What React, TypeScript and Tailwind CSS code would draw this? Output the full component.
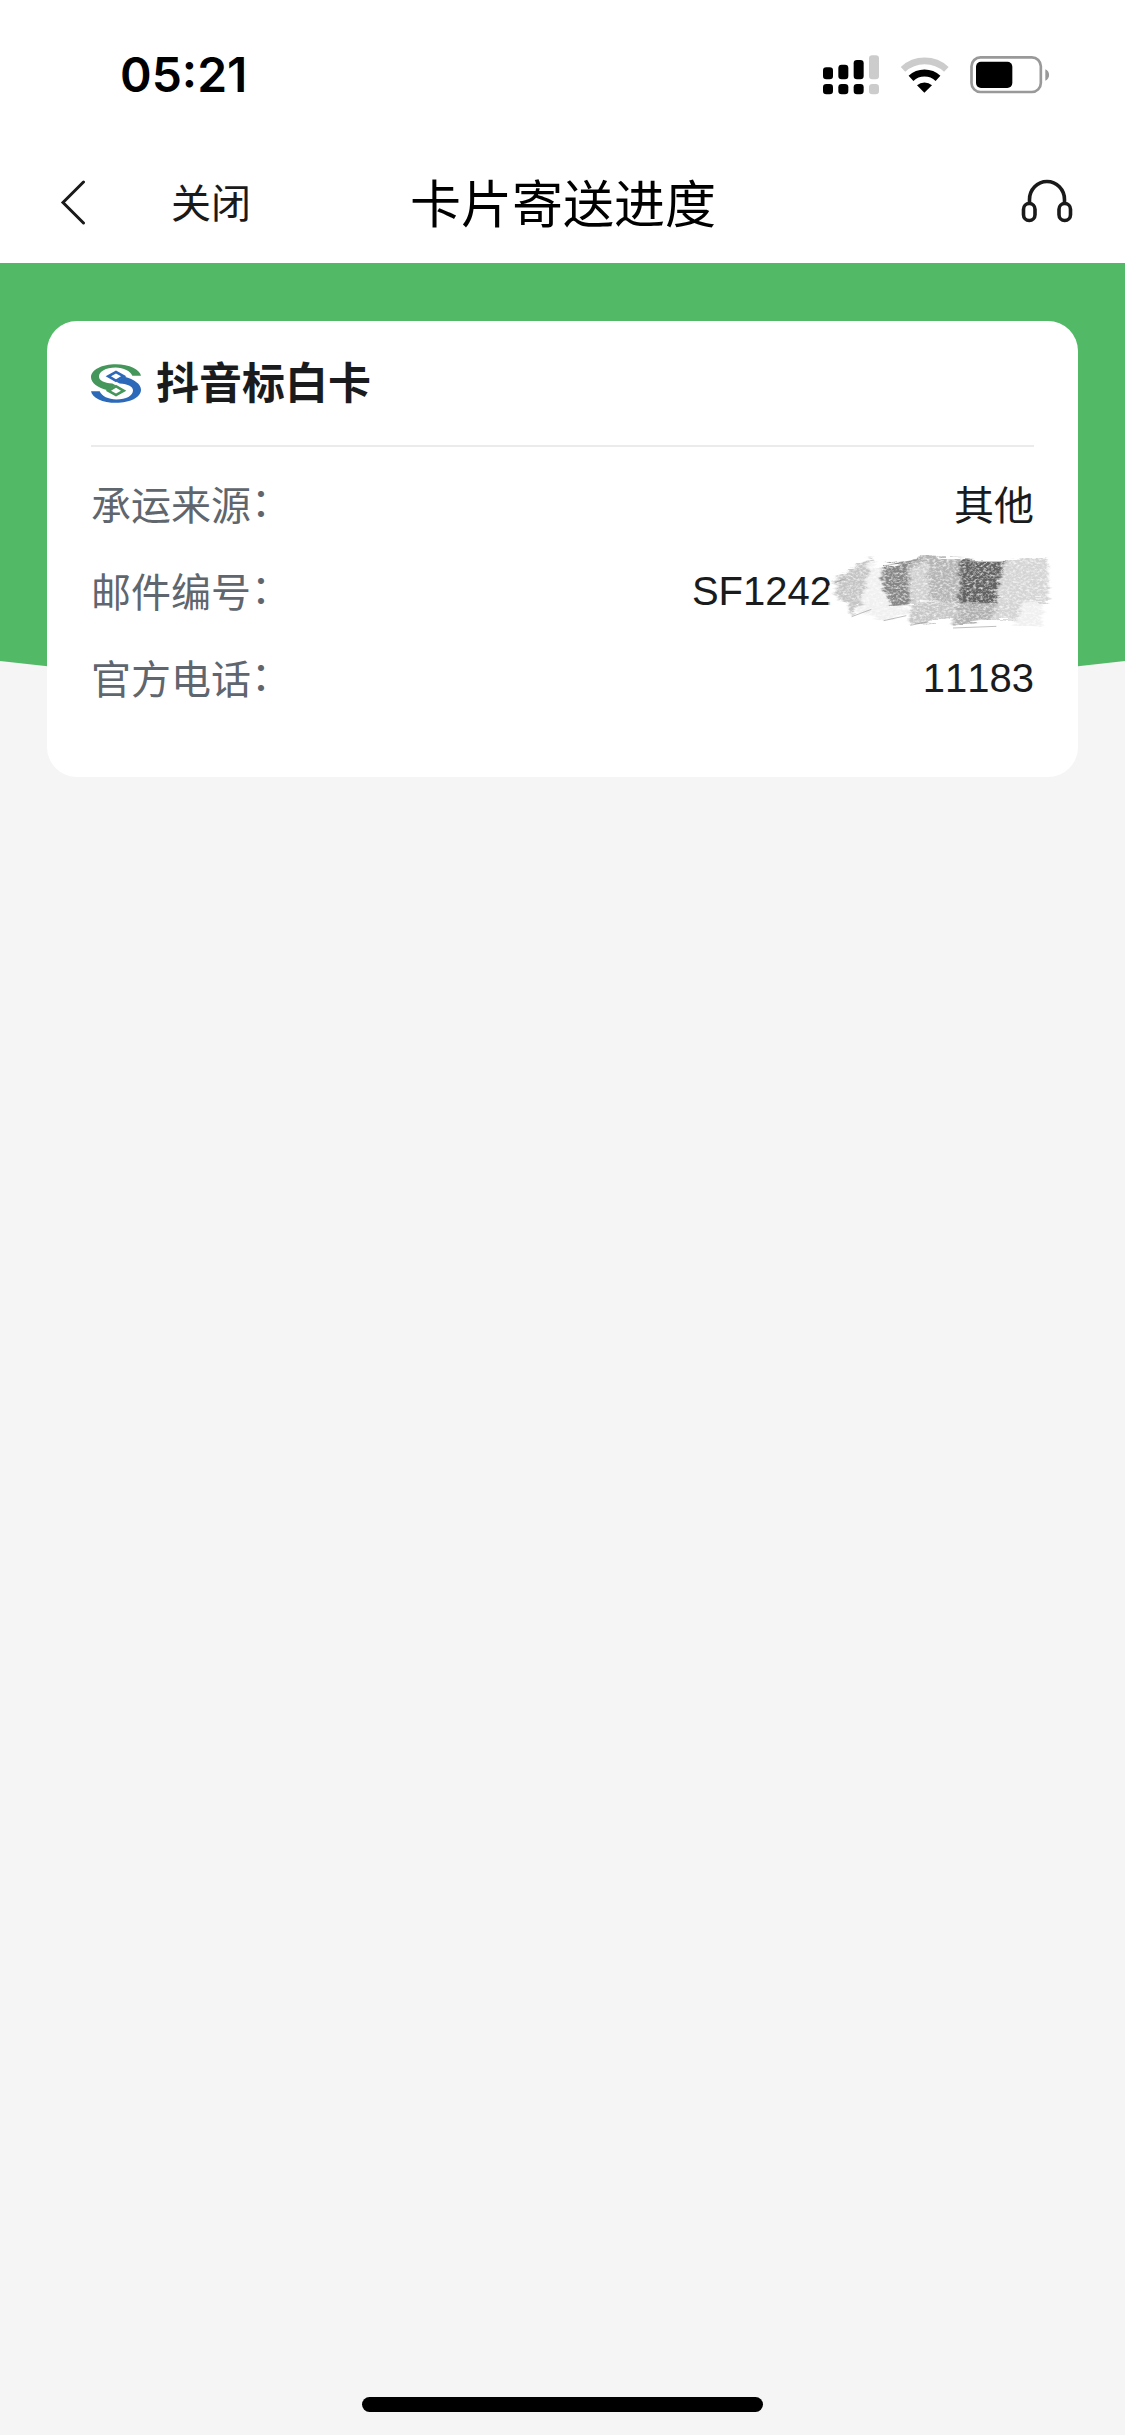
import React from 'react';

interface InfoRowProps {
  label: string;
  children: React.ReactNode;
}

const StatusIcons: React.FC = () => (
  <svg className="h-[44px] w-[234px]" viewBox="60 38 702 132" fill="none">
    {/* Signal */}
    <g fill="#000">
      <rect x="69" y="81" width="30" height="36" rx="10" />
      <rect x="115" y="73" width="30" height="44" rx="10" />
      <rect x="161" y="59" width="30" height="58" rx="10" />
      <rect x="69" y="131" width="30" height="31" rx="10" />
      <rect x="115" y="131" width="30" height="31" rx="10" />
      <rect x="161" y="131" width="30" height="31" rx="10" />
    </g>
    <g fill="#ccc">
      <rect x="207" y="45" width="30" height="72" rx="10" />
      <rect x="207" y="131" width="30" height="31" rx="10" />
    </g>
    {/* Wifi */}
    <path d="M309 87A96 96 0 0 1 439 87" stroke="#ccc" strokeWidth="20" />
    <path d="M333 114A59 59 0 0 1 414 114" stroke="#000" strokeWidth="21" />
    <path d="M373 157L351 135A33 33 0 0 1 396 135Z" fill="#000" />
    {/* Battery */}
    <rect x="514.500" y="51" width="208" height="104" rx="27" stroke="#999" strokeWidth="8" />
    <rect x="528" y="64" width="109" height="79" rx="15" fill="#000" />
    <path d="M736 87C751 92 751 116 736 121Z" fill="#999" />
  </svg>
);

const BankLogo: React.FC = () => (
  <svg className="h-[39px] w-[50px]" viewBox="34 68 150 116">
    <g fill="#45965a">
      <path d="M184 103H158C152 88 132 79 108 78C78 78 58 90 58 105C58 117 72 124 98 126L108 131L84 146C54 138 34 124 34 107C34 84 68 68 108 68C150 68 181 84 184 103Z" />
      <path d="M109 130L140 147.500L109 165L78 147.500ZM109 139L94 147.500L109 156L124 147.500Z" fillRule="evenodd" />
    </g>
    <g fill="#2c69b8" transform="rotate(180 109 126)">
      <path d="M184 103H158C152 88 132 79 108 78C78 78 58 90 58 105C58 117 72 124 98 126L108 131L84 146C54 138 34 124 34 107C34 84 68 68 108 68C150 68 181 84 184 103Z" />
      <path d="M109 130L140 147.500L109 165L78 147.500ZM109 139L94 147.500L109 156L124 147.500Z" fillRule="evenodd" />
    </g>
  </svg>
);

// Pencil scribble that hides the end of the tracking number
const Scribble: React.FC = () => (
  <svg className="relative -my-3 -mr-[23px] -ml-[9px] h-[84px] w-[234px] shrink-0" viewBox="430 60 702 252">
    <defs>
      <filter id="pencil" x="-5%" y="-5%" width="110%" height="110%">
        <feTurbulence type="fractalNoise" baseFrequency="0.01 0.08" numOctaves="3" seed="4" result="edge" />
        <feGaussianBlur in="SourceGraphic" stdDeviation="5 1" result="soft" />
        <feDisplacementMap in="soft" in2="edge" scale="38" xChannelSelector="R" yChannelSelector="A" result="rough" />
        <feTurbulence type="fractalNoise" baseFrequency="0.1 0.16" numOctaves="3" seed="9" />
        <feColorMatrix values="0 0 0 0 0  0 0 0 0 0  0 0 0 0 0  1.8 0 0 0 -0.05" result="grain" />
        <feComposite in="rough" in2="grain" operator="in" result="grained" />
        <feGaussianBlur in="grained" stdDeviation="1.6" />
      </filter>
    </defs>
    <path d="M446 165L470 150V225L446 228Z" fill="#fff" opacity=".7" />
    <g filter="url(#pencil)">
      <path d="M460 150L580 80L575 200L520 255L500 215L470 190Z" fill="#c4c4c4" />
      <path d="M570 90L610 110L620 210L700 240L615 270L540 250Z" fill="#f0f0f0" />
      <path d="M605 105L735 78L700 150L690 222L630 225L607 165Z" fill="#858585" />
      <path d="M680 100L735 76L880 82L850 215L690 215Z" fill="#b4b4b4" />
      <path d="M690 112L745 95L745 215L695 215Z" fill="#d0d0d0" />
      <path d="M690 220L830 215L825 262L690 285Z" fill="#c6c6c6" />
      <path d="M840 88L980 90L950 215L840 218Z" fill="#626262" />
      <path d="M978 88L1103 80L1108 210L955 216Z" fill="#d4d4d4" />
      <path d="M835 218L960 212L950 265L820 285Z" fill="#b0b0b0" />
      <path d="M950 216L1060 212L1040 265L940 268Z" fill="#d3d3d3" />
      <path d="M1030 215L1090 210L1085 290L1000 285Z" fill="#f0f0f0" />
    </g>
    <path d="M467 154L498 143M612 105L714 86M845 92L978 92M628 224L690 217M840 214L925 217M692 283L745 272M820 291L950 286M612 269L680 254M516 257L575 235" fill="none" stroke="#8a8a8a" strokeWidth="3" opacity=".55" />
  </svg>
);

const InfoRow: React.FC<InfoRowProps> = ({ label, children }) => (
  <div className="flex h-[87px] items-center justify-between text-[40px] leading-[60px]">
    <span className="flex text-[#5f666e]">
      {label}
      <span className="relative -top-[4px]">：</span>
    </span>
    <div className="flex items-center text-[#1a1b1d] [font-kerning:none]">{children}</div>
  </div>
);

const App: React.FC = () => {
  return (
    <div className="flex h-[2435px] w-[1125px] flex-col overflow-hidden bg-[#f5f5f5] font-['Liberation_Sans','Noto_Sans_CJK_SC',sans-serif]">
      {/* Status bar */}
      <div className="flex h-[150px] items-center justify-between bg-white pr-[71px] pl-[120px]">
        <span className="font-['Inter',sans-serif] text-[48px] font-semibold text-black">05:21</span>
        <StatusIcons />
      </div>

      {/* Navigation */}
      <header className="grid h-[113px] grid-cols-[1fr_auto_1fr] items-center bg-white pr-[52px] pb-2 pl-[60px]">
        <div className="flex items-center gap-[84px]">
          <svg className="-mt-[2px] h-[46px] w-[27px]" viewBox="0 0 27 46" fill="none" stroke="#1a1a1a" strokeWidth="3" strokeLinecap="round">
            <path d="M23.500 3L3 23.500L23.500 44" />
          </svg>
          <span className="pt-[2px] text-[40px] text-[#1a1a1a]">关闭</span>
        </div>
        <h1 className="-ml-[7px] pt-[7px] text-[51px] text-black">卡片寄送进度</h1>
        <svg className="-mt-[4px] h-[44px] w-[52px] justify-self-end" viewBox="0 0 52 44" fill="none" stroke="#1a1a1a" strokeWidth="3.6">
          <path d="M8.500 25V20.500a17.500 18 0 0 1 35 0V25" />
          <rect x="2.500" y="24.500" width="11.500" height="17" rx="5.700" />
          <rect x="38" y="24.500" width="11.500" height="17" rx="5.700" />
        </svg>
      </header>

      <main className="grow">
        <div className="h-[398px] bg-[#52ba66]" />
        <svg className="block h-[34px] w-full" viewBox="0 0 1125 34" preserveAspectRatio="none">
          <path d="M0 0Q562 66 1125 0Z" fill="#52ba66" />
        </svg>

        {/* Card */}
        <section className="relative mx-[47px] -mt-[374px] h-[456px] rounded-[30px] bg-white px-[44px]">
          <div className="flex h-[126px] items-center gap-[15px] border-b-2 border-[#ebebeb]">
            <BankLogo />
            <h2 className="pt-[2px] text-[43px] font-bold text-[#1a1b1d]">抖音标白卡</h2>
          </div>
          <div className="pt-[15px]">
            <InfoRow label="承运来源">其他</InfoRow>
            <InfoRow label="邮件编号">
              <span className="-mt-[3px]">SF1242</span>
              <Scribble />
            </InfoRow>
            <InfoRow label="官方电话">
              <span className="-mt-[3px]">11183</span>
            </InfoRow>
          </div>
        </section>
      </main>

      {/* Home indicator */}
      <div className="mx-auto mb-[23px] h-[15px] w-[401px] rounded-full bg-black" />
    </div>
  );
};

export default App;
